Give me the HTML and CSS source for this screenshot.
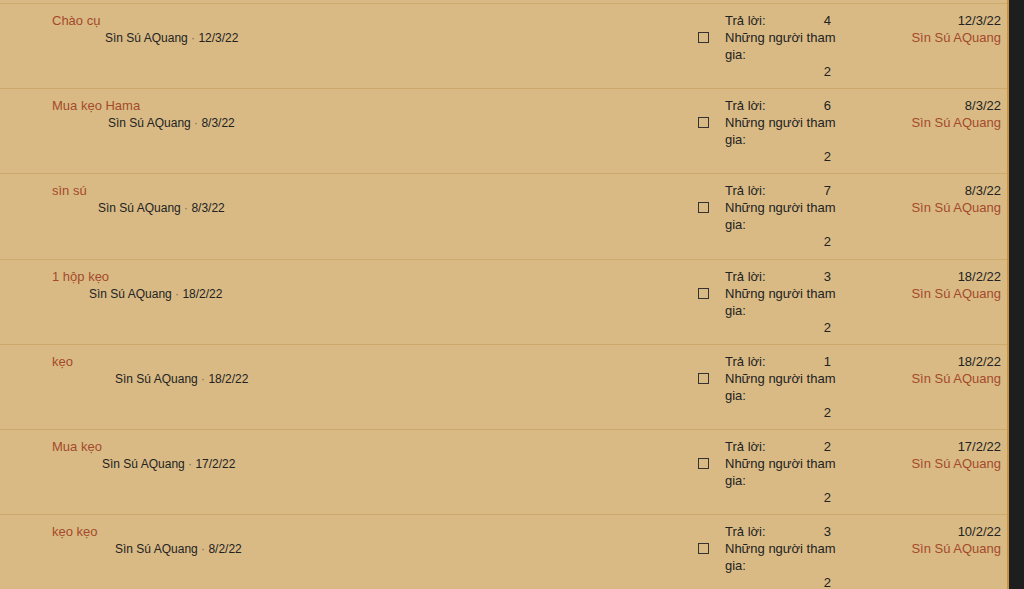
FILE: index.html
```html
<!DOCTYPE html>
<html lang="vi">
<head>
<meta charset="utf-8">
<title>Chủ đề</title>
<link rel="stylesheet" href="styles.css">
</head>
<body>
<div class="list">
  <div class="row">
    <div class="main">
      <a class="title">Chào cụ</a>
      <div class="meta i105">Sìn Sú AQuang <span class="dot">·</span> 12/3/22</div>
    </div>
    <div class="check"><span class="box"></span></div>
    <div class="stats">
      <div class="pair"><span>Trả lời:</span><span class="num">4</span></div>
      <div class="label">Những người tham gia:</div>
      <div class="num">2</div>
    </div>
    <div class="last">
      <div class="date">12/3/22</div>
      <a class="user">Sìn Sú AQuang</a>
    </div>
  </div>
  <div class="row">
    <div class="main">
      <a class="title">Mua kẹo Hama</a>
      <div class="meta i108">Sìn Sú AQuang <span class="dot">·</span> 8/3/22</div>
    </div>
    <div class="check"><span class="box"></span></div>
    <div class="stats">
      <div class="pair"><span>Trả lời:</span><span class="num">6</span></div>
      <div class="label">Những người tham gia:</div>
      <div class="num">2</div>
    </div>
    <div class="last">
      <div class="date">8/3/22</div>
      <a class="user">Sìn Sú AQuang</a>
    </div>
  </div>
  <div class="row">
    <div class="main">
      <a class="title">sìn sú</a>
      <div class="meta i98">Sìn Sú AQuang <span class="dot">·</span> 8/3/22</div>
    </div>
    <div class="check"><span class="box"></span></div>
    <div class="stats">
      <div class="pair"><span>Trả lời:</span><span class="num">7</span></div>
      <div class="label">Những người tham gia:</div>
      <div class="num">2</div>
    </div>
    <div class="last">
      <div class="date">8/3/22</div>
      <a class="user">Sìn Sú AQuang</a>
    </div>
  </div>
  <div class="row">
    <div class="main">
      <a class="title">1 hộp kẹo</a>
      <div class="meta i89">Sìn Sú AQuang <span class="dot">·</span> 18/2/22</div>
    </div>
    <div class="check"><span class="box"></span></div>
    <div class="stats">
      <div class="pair"><span>Trả lời:</span><span class="num">3</span></div>
      <div class="label">Những người tham gia:</div>
      <div class="num">2</div>
    </div>
    <div class="last">
      <div class="date">18/2/22</div>
      <a class="user">Sìn Sú AQuang</a>
    </div>
  </div>
  <div class="row">
    <div class="main">
      <a class="title">kẹo</a>
      <div class="meta i115">Sìn Sú AQuang <span class="dot">·</span> 18/2/22</div>
    </div>
    <div class="check"><span class="box"></span></div>
    <div class="stats">
      <div class="pair"><span>Trả lời:</span><span class="num">1</span></div>
      <div class="label">Những người tham gia:</div>
      <div class="num">2</div>
    </div>
    <div class="last">
      <div class="date">18/2/22</div>
      <a class="user">Sìn Sú AQuang</a>
    </div>
  </div>
  <div class="row">
    <div class="main">
      <a class="title">Mua kẹo</a>
      <div class="meta i102">Sìn Sú AQuang <span class="dot">·</span> 17/2/22</div>
    </div>
    <div class="check"><span class="box"></span></div>
    <div class="stats">
      <div class="pair"><span>Trả lời:</span><span class="num">2</span></div>
      <div class="label">Những người tham gia:</div>
      <div class="num">2</div>
    </div>
    <div class="last">
      <div class="date">17/2/22</div>
      <a class="user">Sìn Sú AQuang</a>
    </div>
  </div>
  <div class="row">
    <div class="main">
      <a class="title">kẹo kẹo</a>
      <div class="meta i115">Sìn Sú AQuang <span class="dot">·</span> 8/2/22</div>
    </div>
    <div class="check"><span class="box"></span></div>
    <div class="stats">
      <div class="pair"><span>Trả lời:</span><span class="num">3</span></div>
      <div class="label">Những người tham gia:</div>
      <div class="num">2</div>
    </div>
    <div class="last">
      <div class="date">10/2/22</div>
      <a class="user">Sìn Sú AQuang</a>
    </div>
  </div>
</div>
</body>
</html>
```
FILE: styles.css
```css
html, body {
  margin: 0;
  padding: 0;
  height: 100%;
  overflow: hidden;
}
body {
  background: #1e1e1e;
  font-family: "Liberation Sans", Arial, sans-serif;
  font-size: 13px;
  line-height: 17px;
  color: #222;
}
.list {
  width: 1007px;
  height: 100%;
  background: #d9ba85;
  border-right: 2px solid #c8923f;
  padding-top: 3px;
}
.row {
  display: flex;
  height: 76.2px;
  border-top: 1px solid #cda96c;
  padding: 8px 6px 0 0;
  box-sizing: content-box;
}
.main {
  flex: 1;
  padding-left: 52px;
  display: flex;
  flex-direction: column;
  align-items: flex-start;
}
.title {
  color: #a44a2a;
  text-decoration: none;
}
.meta {
  font-size: 12px;
  line-height: 18px;
  color: #222;
}
.dot { color: #7a6a55; }
.i105 { margin-left: 53px; }
.i108 { margin-left: 56px; }
.i98 { margin-left: 46px; }
.i89 { margin-left: 37px; }
.i115 { margin-left: 63px; }
.i102 { margin-left: 50px; }
.check {
  width: 27px;
  padding: 20px 0 0 0;
  box-sizing: border-box;
}
.box {
  display: block;
  width: 9px;
  height: 9px;
  border: 1px solid #333;
}
.stats {
  width: 106px;
}
.pair {
  display: flex;
  justify-content: space-between;
}
.label {
  width: 112px;
}
.stats > .num { text-align: right; }
.last {
  width: 170px;
  text-align: right;
}
.user {
  display: block;
  color: #a44a2a;
  text-decoration: none;
}
```
